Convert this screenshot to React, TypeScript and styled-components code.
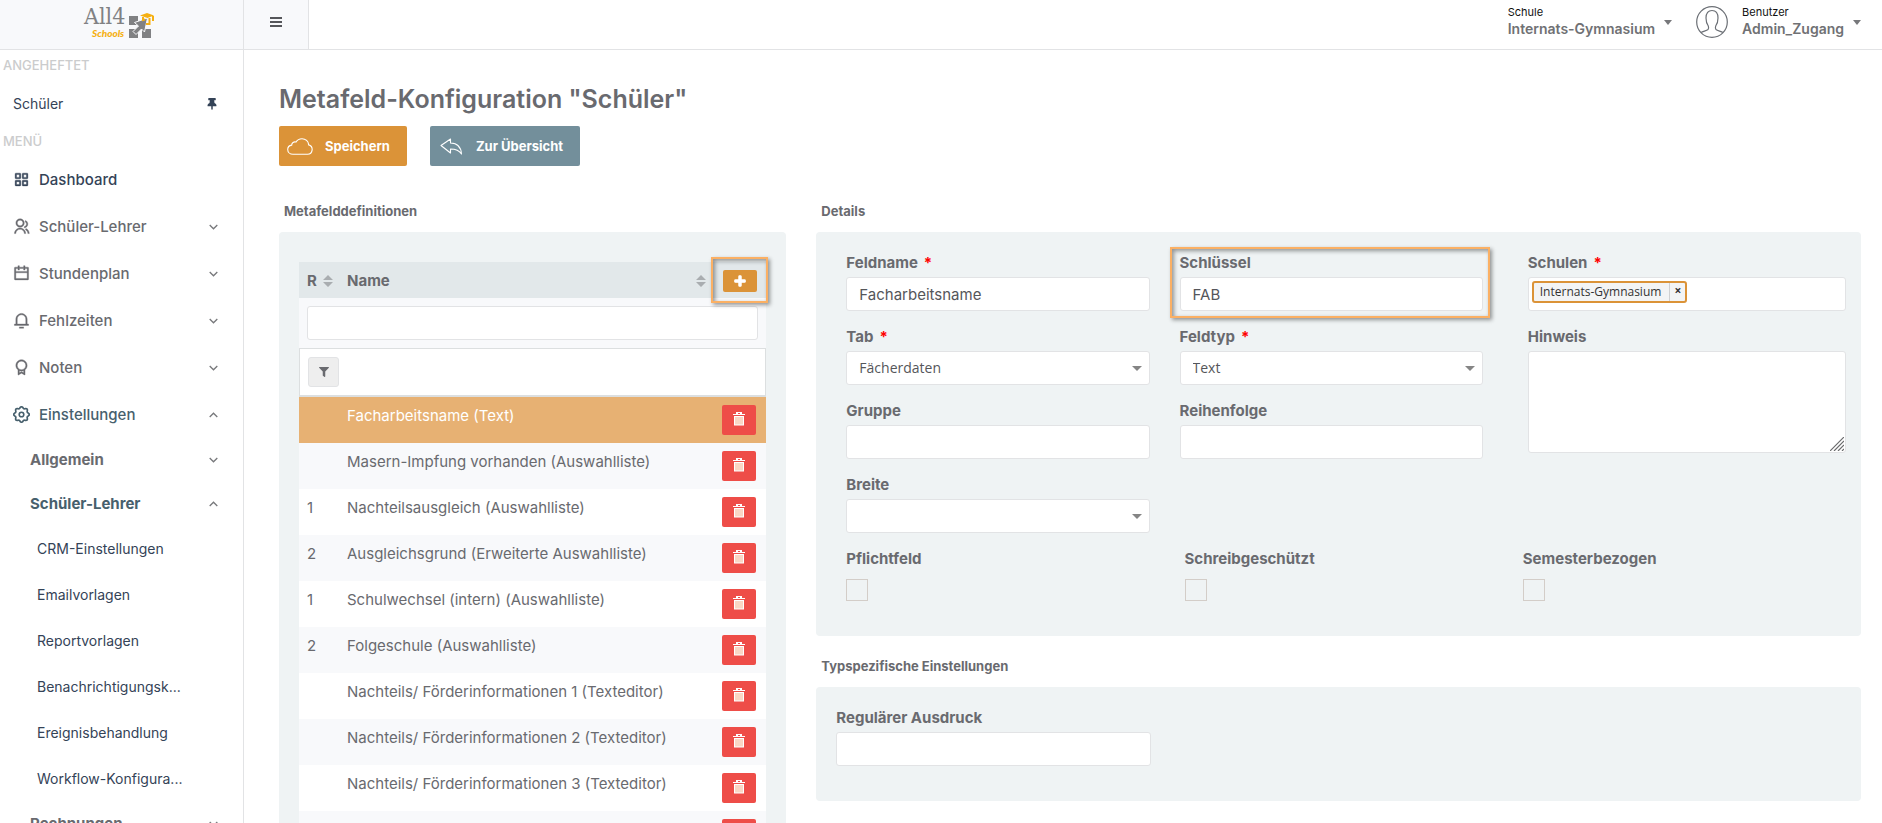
import React, { useState } from 'react';
import styled, { createGlobalStyle, css } from 'styled-components';
import { FaFilter, FaPlus, FaThumbtack } from 'react-icons/fa';
import {
  RiAwardLine,
  RiCalendarLine,
  RiFunctionLine,
  RiGroupLine,
  RiNotification3Line,
} from 'react-icons/ri';

const color = {
  text: '#696a6f',
  link: '#344357',
  active: '#47606d',
  muted: '#cbcccd',
  line: '#e2e3e5',
  panel: '#eff3f4',
  shade: '#f8f9fb',
  orange: '#db9338',
  slate: '#738f9b',
  red: '#ee4d48',
  mark: '#fbb064',
};

const GlobalStyle = createGlobalStyle`
  * { box-sizing: border-box; }
  body {
    margin: 0;
    background: #fff;
    color: ${color.text};
    font: 400 15px/20px Inter, "Open Sans", sans-serif;
  }
  button, input, select, textarea { font: inherit; color: inherit; }
  a { color: inherit; text-decoration: none; }
  svg { display: block; flex: none; }
`;

const Shell = styled.div`
  display: flex;
  flex-direction: column;
  height: 100vh;
  overflow: hidden;
`;

/* ---------- top bar ---------- */

const TopBar = styled.header`
  display: flex;
  flex: none;
  height: 50px;
  border-bottom: 1px solid ${color.line};
`;

const Brand = styled.a`
  display: flex;
  justify-content: center;
  width: 244px;
  padding-right: 6px;
  background: ${color.shade};
  border-right: 1px solid ${color.line};
`;

const MenuToggle = styled.button`
  display: grid;
  place-items: center;
  width: 65px;
  padding: 0 0 5px;
  border: 0;
  border-right: 1px solid ${color.line};
  background: ${color.shade};
`;

const TopBarRight = styled.div`
  display: flex;
  gap: 24px;
  margin-left: auto;
  padding: 4px 21px 0 0;
`;

const Switcher = styled.button`
  display: flex;
  align-items: flex-start;
  padding: 0;
  border: 0;
  background: none;
  text-align: left;
`;

const SwitcherText = styled.span`
  display: flex;
  flex-direction: column;
  margin-right: 9px;
`;

const SwitcherLabel = styled.span`
  color: #111;
  font-size: 11px;
  line-height: 16px;
`;

const SwitcherValue = styled.span`
  color: #707174;
  font-size: 14px;
  font-weight: 600;
  line-height: 18px;
`;

const CaretSlot = styled.span`
  padding-top: 16px;
`;

const AvatarSlot = styled.span`
  padding: 2px 14px 0 0;
`;

/* ---------- sidebar ---------- */

const Body = styled.div`
  display: flex;
  flex: 1;
  min-height: 0;
`;

const Sidebar = styled.nav`
  flex: none;
  width: 244px;
  padding-top: 1px;
  overflow: auto;
  scrollbar-width: none;
  border-right: 1px solid ${color.line};
`;

const SidebarHeading = styled.h2`
  margin: 0;
  padding-left: 3px;
  color: ${color.muted};
  font-size: 13px;
  font-weight: 500;
  line-height: 29px;
`;

type Level = 'pinned' | 'top' | 'sub' | 'leaf';

const levelStyles = {
  pinned: css`
    height: 47px;
    padding-left: 13px;
    color: ${color.link};
    font-size: 14px;
  `,
  top: css`
    height: 47px;
    padding-left: 13px;
    font-weight: 500;
  `,
  sub: css`
    height: 44px;
    padding-left: 30px;
    font-weight: 700;
  `,
  leaf: css`
    height: 46px;
    padding-left: 37px;
    color: ${color.link};
    font-size: 14px;
  `,
};

const NavLink = styled.a<{ $level: Level; $tone?: 'link' | 'active' }>`
  display: flex;
  align-items: center;
  justify-content: space-between;
  padding-right: 25px;
  ${p => levelStyles[p.$level]}
  ${p => p.$tone && `color: ${color[p.$tone]};`}
`;

const NavLabel = styled.span`
  display: flex;
  align-items: center;
  gap: 9px;
  white-space: nowrap;
  & > svg { stroke: currentColor; stroke-width: 0.5px; }
`;

/* ---------- page ---------- */

const Main = styled.main`
  flex: 1;
  min-width: 0;
  overflow: auto;
  scrollbar-width: none;
  padding: 34px 21px 20px 35px;
`;

const Title = styled.h1`
  margin: 0 0 12px;
  font-size: 25px;
  font-weight: 600;
  line-height: 30px;
`;

const Actions = styled.div`
  display: flex;
  gap: 23px;
  margin-bottom: 35px;
`;

const ActionButton = styled.button<{ $bg: string }>`
  display: flex;
  align-items: center;
  gap: 12px;
  height: 40px;
  padding: 0 17px 0 8px;
  border: 0;
  border-radius: 2px;
  background: ${p => p.$bg};
  color: #fff;
  font-size: 13px;
  font-weight: 700;
`;

const Columns = styled.div`
  display: grid;
  grid-template-columns: repeat(12, minmax(0, 1fr));
  gap: 30px;
`;

const Column = styled.div<{ $span: number }>`
  grid-column: span ${p => p.$span};
`;

const SectionTitle = styled.h3`
  margin: 0 0 11px 5px;
  font-size: 13px;
  font-weight: 700;
`;

const Panel = styled.section<{ $pad: string }>`
  padding: ${p => p.$pad};
  border-radius: 4px;
  background: ${color.panel};
  & + h3 { margin-top: 20px; }
`;

const Highlight = styled.span<{ $inset: string }>`
  position: absolute;
  inset: ${p => p.$inset};
  border: 2px solid ${color.mark};
  box-shadow: 2px 2px 4px rgba(0, 0, 0, 0.4), inset 2px 2px 4px rgba(0, 0, 0, 0.4);
  pointer-events: none;
`;

const controlBox = css`
  width: 100%;
  height: 34px;
  padding: 0 12px;
  border: 1px solid ${color.line};
  border-radius: 3px;
  background: #fff;
  color: #55565a;
  outline: 0;
`;

const TextInput = styled.input`
  ${controlBox}
`;

/* ---------- definition table ---------- */

const Table = styled.table`
  width: 100%;
  border-collapse: separate;
  border-spacing: 0;
  table-layout: fixed;
`;

const NumberCol = styled.col`
  width: 40px;
`;

const ActionCol = styled.col`
  width: 52px;
`;

const HeadCell = styled.th`
  height: 36px;
  padding: 1px 8px 0;
  background: #e2e8ea;
  font-weight: 700;
  text-align: left;
`;

const HeadContent = styled.span<{ $spread?: boolean }>`
  display: flex;
  align-items: center;
  gap: 6px;
  ${p => p.$spread && 'justify-content: space-between;'}
`;

const AddSlot = styled.div`
  position: relative;
  width: 34px;
  margin: 1px 0 0 1px;
`;

const AddButton = styled.button`
  display: grid;
  place-items: center;
  width: 34px;
  height: 22px;
  padding: 0;
  border: 0;
  border-radius: 2px;
  background: ${color.orange};
  color: #fff;
  & > svg { stroke: currentColor; stroke-width: 50px; }
`;

const SearchCell = styled.td`
  height: 50px;
  padding: 8px;
  background: ${color.shade};
`;

const FilterCell = styled.td`
  height: 49px;
  padding: 8px;
  border: 1px solid #dcdfe0;
  border-bottom-width: 2px;
  background: #fff;
`;

const FilterButton = styled.button`
  display: grid;
  place-items: center;
  width: 31px;
  height: 30px;
  padding: 0;
  border: 1px solid ${color.line};
  border-radius: 3px;
  background: #eee;
`;

const Row = styled.tr<{ $selected: boolean }>`
  background: #fff;
  &:nth-child(even) { background: ${color.shade}; }
  ${p => p.$selected && css`
    background: #e7b173;
    color: #fff;
  `}
`;

const Cell = styled.td`
  height: 46px;
  padding: 8px;
  line-height: 22px;
  vertical-align: top;
  white-space: nowrap;
`;

const DeleteButton = styled.button`
  display: grid;
  justify-items: center;
  align-content: start;
  width: 34px;
  height: 30px;
  padding: 7px 0 0;
  border: 0;
  border-radius: 2px;
  background: ${color.red};
  color: #fff;
`;

/* ---------- details form ---------- */

const FormGrid = styled.div`
  display: grid;
  grid-template-columns: minmax(0, 2fr) minmax(0, 1fr);
  gap: 45px;
  margin-bottom: 15px;
`;

const PairGrid = styled.div`
  display: grid;
  grid-template-columns: repeat(2, minmax(0, 1fr));
  gap: 15px 30px;
`;

const SideFields = styled.div`
  display: flex;
  flex-direction: column;
  gap: 15px;
`;

const ThirdsGrid = styled.div<{ $gap: number }>`
  display: grid;
  grid-template-columns: repeat(3, minmax(0, 1fr));
  gap: ${p => p.$gap}px;
`;

const FieldBox = styled.div`
  position: relative;
  display: flex;
  flex-direction: column;
  gap: 4px;
`;

const Label = styled.label`
  padding-top: 1px;
  font-weight: 700;
`;

const Required = styled.span`
  margin-left: 6px;
  color: #f00;
`;

const SelectBox = styled.span`
  display: grid;
  align-items: center;
  & > * { grid-area: 1 / 1; }
  & > svg { justify-self: end; margin-right: 8px; pointer-events: none; }
`;

const Select = styled.select`
  ${controlBox}
  appearance: none;
  font-family: "Open Sans", sans-serif;
  font-size: 14px;
`;

const TagBox = styled.div`
  ${controlBox}
  padding: 3px;
`;

const Tag = styled.span`
  display: inline-flex;
  height: 22px;
  border: 2px solid ${color.orange};
  border-radius: 3px;
  background: #f3f4f5;
  color: #333;
  font: 400 12px/18px "Open Sans", sans-serif;
`;

const TagText = styled.span`
  padding: 0 8px 0 6px;
`;

const TagRemove = styled.button`
  width: 16px;
  padding: 0 0 2px;
  border: 0;
  border-left: 1px solid #cfd0d2;
  background: none;
  font-size: 12px;
  font-weight: 700;
  line-height: 14px;
`;

const NoteBox = styled.span`
  position: relative;
  display: block;
  & > svg { position: absolute; right: 2px; bottom: 2px; pointer-events: none; }
`;

const Note = styled.textarea`
  ${controlBox}
  display: block;
  height: 102px;
  resize: none;
`;

const CheckField = styled.div`
  display: flex;
  flex-direction: column;
  align-items: flex-start;
  gap: 10px;
`;

const Checkbox = styled.input`
  appearance: none;
  width: 22px;
  height: 22px;
  margin: 0;
  border: 1px solid #d3cdc8;
  background: transparent;
  &:checked { background: ${color.orange}; }
`;

/* ---------- drawings ---------- */

const Logo = () => (
  <svg width="72" height="44" viewBox="0 0 72 44" role="img" aria-label="All4Schools">
    <text x="1" y="24" fill="#808183" fontFamily="'DejaVu Serif Condensed','DejaVu Serif',serif" fontStretch="condensed" fontSize="23">All4</text>
    <text x="9" y="37" fill="#f5b012" fontFamily="Lato,sans-serif" fontStyle="italic" fontWeight="900" fontSize="10">Schools</text>
    <g fill="#808183">
      <path d="M46 16h9v9h-9zM46 29h9v9h-9zM59 29h9v9h-9z" />
      <path d="M64.500 18 61.500 32 58.500 29 53 34.500 50 31.500 55.500 26 51.500 22.500z" stroke="#f8f9fb" strokeWidth="1" />
    </g>
    <path d="M57 15.500 64 13l7 2.500-6.500 2.500z" fill="#f5b012" />
    <path d="M60 17v3l2-.5M70 16v5M66.500 18v6H63" fill="none" stroke="#f5b012" strokeWidth="2" />
  </svg>
);

const BurgerIcon = () => (
  <svg width="12" height="10" viewBox="0 0 12 10" fill="#55565a">
    <path d="M0 0h12v2H0zM0 4h12v2H0zM0 8h12v2H0z" />
  </svg>
);

const Avatar = () => (
  <svg width="32" height="32" viewBox="0 0 32 32" fill="none" stroke="#6b6f75" strokeWidth="1.200">
    <circle cx="16" cy="16" r="15.300" />
    <path d="M5 26.500c2-1.300 5.500-1.700 7-3 .8-.8.700-2.300.3-3.500-1.500-2-2.300-4.500-2.300-8C10 7 12.300 4.500 16 4.500S22 7 22 12c0 3.500-.8 6-2.300 8-.4 1.200-.5 2.700.3 3.500 1.500 1.300 5 1.700 7 3" />
  </svg>
);

/* Gear outline: a circle whose radius waves eight times on its way round. */
const gearOutline = Array.from({ length: 96 }, (_, i) => {
  const angle = (i / 96) * Math.PI * 2;
  const radius = 7 + 0.8 * Math.cos(8 * angle);
  return `${(8.5 + radius * Math.sin(angle)).toFixed(2)},${(8.5 - radius * Math.cos(angle)).toFixed(2)}`;
}).join(' ');

const GearIcon = ({ size }: { size: number }) => (
  <svg width={size} height={size} viewBox="0 0 17 17" fill="none">
    <polygon points={gearOutline} stroke="currentColor" strokeWidth="1.700" strokeLinejoin="round" />
    <circle cx="8.500" cy="8.500" r="2.300" stroke="currentColor" strokeWidth="1.600" />
  </svg>
);

const Caret = ({ width = 8, fill = '#77787b' }: { width?: number; fill?: string }) => (
  <svg width={width} height="5" viewBox="0 0 10 5" preserveAspectRatio="none" fill={fill}>
    <path d="M0 0h10L5 5z" />
  </svg>
);

const Chevron = ({ up }: { up?: boolean }) => (
  <svg width="9" height="6" viewBox="0 0 9 6" fill="none" stroke="#77787b" strokeWidth="1.300">
    <path d={up ? 'M.7 5 4.500 1.200 8.300 5' : 'M.7 1 4.500 4.800 8.300 1'} />
  </svg>
);

const SortIcon = () => (
  <svg width="10" height="12" viewBox="0 0 10 12" fill="#a9adb0">
    <path d="M0 5 5 0l5 5zM0 7h10l-5 5z" />
  </svg>
);

const CloudIcon = () => (
  <svg width="26" height="17" viewBox="0 0 26 17" fill="none" stroke="#fff" strokeWidth="1.100">
    <path d="M6 16.300h14.500a4.800 4.800 0 0 0 1.200-9.400C21.500 3.300 18.500.7 15 .7c-2.600 0-4.800 1.300-6 3.400-2.200-.8-4.300.8-4.300 3C2.300 7.500.7 9.400.7 11.500c0 2.700 2.300 4.800 5.300 4.800z" />
  </svg>
);

const BackIcon = () => (
  <svg width="26" height="17" viewBox="0 0 26 17" fill="none" stroke="#fff" strokeWidth="1.100" strokeLinejoin="round">
    <path d="M3 7.500 12.500 1v4c6 .2 10.500 3.500 11 11-2.500-4-5.500-5-11-5v4z" />
  </svg>
);

const TrashIcon = () => (
  <svg width="12" height="14" viewBox="0 0 12 14" fill="#fff">
    <path d="M3 0h6v2h3v1H0V2h3zM5 1v1h2V1z" fillRule="evenodd" />
    <path d="M1 4h10v9.500H1z" />
    <path d="M3 5v7.500M5 5v7.500M7 5v7.500M9 5v7.500" stroke="#f19a6c" strokeWidth=".8" />
  </svg>
);

const ResizeGrip = () => (
  <svg width="14" height="14" viewBox="0 0 14 14" stroke="#6b6c6e" strokeWidth="1.200">
    <path d="M0 14 14 0M4 14 14 4M8 14l6-6M12 14l2-2" />
  </svg>
);

/* ---------- data ---------- */

const sections = [
  { label: 'Dashboard', Icon: RiFunctionLine, tone: 'link' as const },
  { label: 'Schüler-Lehrer', Icon: RiGroupLine, expandable: true },
  { label: 'Stundenplan', Icon: RiCalendarLine, expandable: true },
  { label: 'Fehlzeiten', Icon: RiNotification3Line, expandable: true },
  { label: 'Noten', Icon: RiAwardLine, expandable: true },
  { label: 'Einstellungen', Icon: GearIcon, expandable: true, open: true, tone: 'active' as const },
];

const settingsPages = [
  'CRM-Einstellungen',
  'Emailvorlagen',
  'Reportvorlagen',
  'Benachrichtigungsk...',
  'Ereignisbehandlung',
  'Workflow-Konfigura...',
];

const definitions = [
  { order: '', name: 'Facharbeitsname (Text)' },
  { order: '', name: 'Masern-Impfung vorhanden (Auswahlliste)' },
  { order: '1', name: 'Nachteilsausgleich (Auswahlliste)' },
  { order: '2', name: 'Ausgleichsgrund (Erweiterte Auswahlliste)' },
  { order: '1', name: 'Schulwechsel (intern) (Auswahlliste)' },
  { order: '2', name: 'Folgeschule (Auswahlliste)' },
  { order: '', name: 'Nachteils/ Förderinformationen 1 (Texteditor)' },
  { order: '', name: 'Nachteils/ Förderinformationen 2 (Texteditor)' },
  { order: '', name: 'Nachteils/ Förderinformationen 3 (Texteditor)' },
  { order: '', name: 'Sport (Auswahlliste)' },
];

/* ---------- composed parts ---------- */

interface FieldProps {
  id: string;
  label: string;
  required?: boolean;
  children: React.ReactNode;
}

const Field = ({ id, label, required, children }: FieldProps) => (
  <FieldBox>
    <Label htmlFor={id}>
      {label}
      {required && <Required>*</Required>}
    </Label>
    {children}
  </FieldBox>
);

const SelectField = ({ id, label, required, option }: { id: string; label: string; required?: boolean; option: string }) => (
  <Field id={id} label={label} required={required}>
    <SelectBox>
      <Select id={id}>
        <option>{option}</option>
      </Select>
      <Caret width={10} fill="#858585" />
    </SelectBox>
  </Field>
);

const Check = ({ id, label }: { id: string; label: string }) => (
  <CheckField>
    <Label htmlFor={id}>{label}</Label>
    <Checkbox type="checkbox" id={id} />
  </CheckField>
);

const Navigation = () => (
  <Sidebar aria-label="Hauptmenü">
    <SidebarHeading>ANGEHEFTET</SidebarHeading>
    <NavLink href="#schueler" $level="pinned">
      <NavLabel>Schüler</NavLabel>
      <FaThumbtack size={12} />
    </NavLink>
    <SidebarHeading>MENÜ</SidebarHeading>
    {sections.map(({ label, Icon, tone, expandable, open }) => (
      <NavLink key={label} href="#" $level="top" $tone={tone}>
        <NavLabel>
          <Icon size={17} />
          {label}
        </NavLabel>
        {expandable && <Chevron up={open} />}
      </NavLink>
    ))}
    <NavLink href="#" $level="sub">
      Allgemein
      <Chevron />
    </NavLink>
    <NavLink href="#" $level="sub" $tone="active">
      Schüler-Lehrer
      <Chevron up />
    </NavLink>
    {settingsPages.map(page => (
      <NavLink key={page} href="#" $level="leaf">{page}</NavLink>
    ))}
    <NavLink href="#" $level="sub">
      Rechnungen
      <Chevron />
    </NavLink>
  </Sidebar>
);

const DefinitionTable = () => {
  const [selected, setSelected] = useState(0);
  return (
    <Table>
      <colgroup>
        <NumberCol />
        <col />
        <ActionCol />
      </colgroup>
      <thead>
        <tr>
          <HeadCell scope="col">
            <HeadContent>R<SortIcon /></HeadContent>
          </HeadCell>
          <HeadCell scope="col">
            <HeadContent $spread>Name<SortIcon /></HeadContent>
          </HeadCell>
          <HeadCell>
            <AddSlot>
              <AddButton aria-label="Hinzufügen"><FaPlus size={12} /></AddButton>
              <Highlight $inset="-13px -11px -11px -12px" />
            </AddSlot>
          </HeadCell>
        </tr>
        <tr>
          <SearchCell colSpan={3}>
            <TextInput aria-label="Suche" />
          </SearchCell>
        </tr>
        <tr>
          <FilterCell colSpan={3}>
            <FilterButton aria-label="Filter"><FaFilter size={10} /></FilterButton>
          </FilterCell>
        </tr>
      </thead>
      <tbody>
        {definitions.map((d, i) => (
          <Row key={d.name} $selected={i === selected} onClick={() => setSelected(i)}>
            <Cell>{d.order}</Cell>
            <Cell>{d.name}</Cell>
            <Cell>
              <DeleteButton aria-label="Löschen"><TrashIcon /></DeleteButton>
            </Cell>
          </Row>
        ))}
      </tbody>
    </Table>
  );
};

const DetailsForm = () => (
  <>
    <SectionTitle>Details</SectionTitle>
    <Panel $pad="20px 15px 35px 30px">
      <FormGrid>
        <PairGrid>
          <Field id="feldname" label="Feldname" required>
            <TextInput id="feldname" defaultValue="Facharbeitsname" />
          </Field>
          <FieldBox>
            <Label htmlFor="schluessel">Schlüssel</Label>
            <TextInput id="schluessel" defaultValue="FAB" />
            <Highlight $inset="-5px -7px -7px -10px" />
          </FieldBox>
          <SelectField id="tab" label="Tab" required option="Fächerdaten" />
          <SelectField id="feldtyp" label="Feldtyp" required option="Text" />
          <Field id="gruppe" label="Gruppe">
            <TextInput id="gruppe" />
          </Field>
          <Field id="reihenfolge" label="Reihenfolge">
            <TextInput id="reihenfolge" />
          </Field>
          <SelectField id="breite" label="Breite" option="" />
        </PairGrid>
        <SideFields>
          <Field id="schulen" label="Schulen" required>
            <TagBox>
              <Tag>
                <TagText>Internats-Gymnasium</TagText>
                <TagRemove id="schulen" aria-label="Internats-Gymnasium entfernen">×</TagRemove>
              </Tag>
            </TagBox>
          </Field>
          <Field id="hinweis" label="Hinweis">
            <NoteBox>
              <Note id="hinweis" />
              <ResizeGrip />
            </NoteBox>
          </Field>
        </SideFields>
      </FormGrid>
      <ThirdsGrid $gap={15}>
        <Check id="pflichtfeld" label="Pflichtfeld" />
        <Check id="schreibgeschuetzt" label="Schreibgeschützt" />
        <Check id="semesterbezogen" label="Semesterbezogen" />
      </ThirdsGrid>
    </Panel>
    <SectionTitle>Typspezifische Einstellungen</SectionTitle>
    <Panel $pad="20px 20px 35px">
      <ThirdsGrid $gap={30}>
        <Field id="regex" label="Regulärer Ausdruck">
          <TextInput id="regex" />
        </Field>
      </ThirdsGrid>
    </Panel>
  </>
);

export default function App() {
  return (
    <Shell>
      <GlobalStyle />
      <TopBar>
        <Brand href="#"><Logo /></Brand>
        <MenuToggle aria-label="Menü umschalten"><BurgerIcon /></MenuToggle>
        <TopBarRight>
          <Switcher>
            <SwitcherText>
              <SwitcherLabel>Schule</SwitcherLabel>
              <SwitcherValue>Internats-Gymnasium</SwitcherValue>
            </SwitcherText>
            <CaretSlot><Caret /></CaretSlot>
          </Switcher>
          <Switcher>
            <AvatarSlot><Avatar /></AvatarSlot>
            <SwitcherText>
              <SwitcherLabel>Benutzer</SwitcherLabel>
              <SwitcherValue>Admin_Zugang</SwitcherValue>
            </SwitcherText>
            <CaretSlot><Caret /></CaretSlot>
          </Switcher>
        </TopBarRight>
      </TopBar>
      <Body>
        <Navigation />
        <Main>
          <Title>Metafeld-Konfiguration "Schüler"</Title>
          <Actions>
            <ActionButton $bg={color.orange}><CloudIcon />Speichern</ActionButton>
            <ActionButton $bg={color.slate}><BackIcon />Zur Übersicht</ActionButton>
          </Actions>
          <Columns>
            <Column $span={4}>
              <SectionTitle>Metafelddefinitionen</SectionTitle>
              <Panel $pad="30px 20px">
                <DefinitionTable />
              </Panel>
            </Column>
            <Column $span={8}>
              <DetailsForm />
            </Column>
          </Columns>
        </Main>
      </Body>
    </Shell>
  );
}
